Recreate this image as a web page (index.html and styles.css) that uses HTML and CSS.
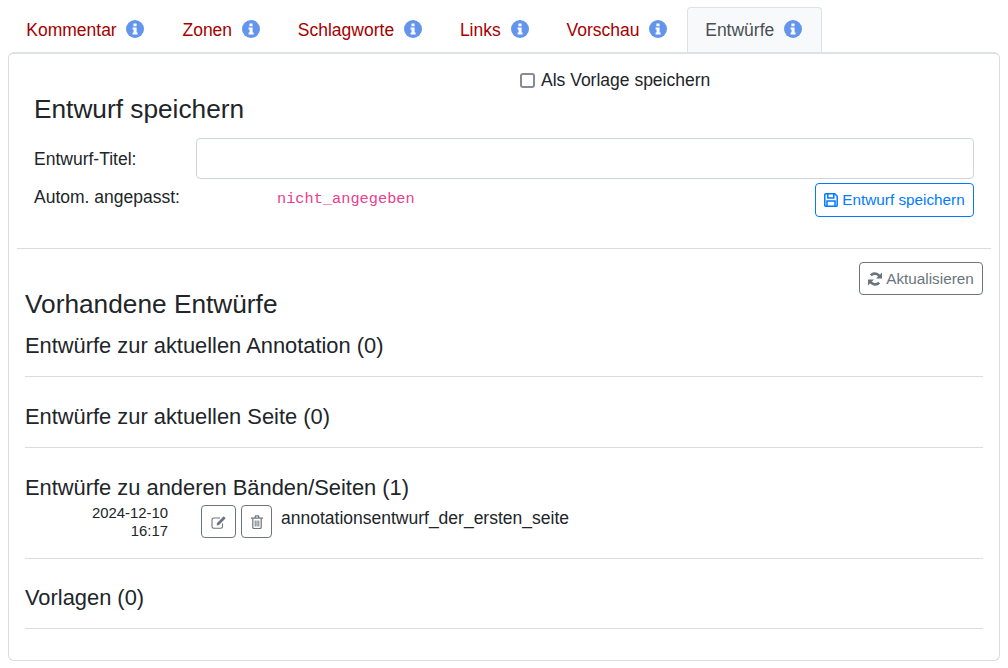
FILE: index.html
```html
<!DOCTYPE html>
<html lang="de">
<head>
<meta charset="utf-8">
<title>Entwürfe</title>
<link rel="stylesheet" href="styles.css">
</head>
<body>
<svg class="defs" width="0" height="0" aria-hidden="true">
  <symbol id="info" viewBox="0 0 18 18">
    <circle cx="9" cy="9" r="9" fill="#6495ed"/>
    <rect x="7.400" y="3.500" width="3.200" height="2.800" rx=".5" fill="#fff"/>
    <path d="M6.600 7.500h4v5h1v2H6.600v-2h1v-3h-1z" fill="#fff"/>
  </symbol>
</svg>
<ul class="tabs">
  <li class="tab"><span>Kommentar</span><svg class="info"><use href="#info"/></svg></li>
  <li class="tab"><span>Zonen</span><svg class="info"><use href="#info"/></svg></li>
  <li class="tab"><span>Schlagworte</span><svg class="info"><use href="#info"/></svg></li>
  <li class="tab"><span>Links</span><svg class="info"><use href="#info"/></svg></li>
  <li class="tab"><span>Vorschau</span><svg class="info"><use href="#info"/></svg></li>
  <li class="tab active"><span>Entwürfe</span><svg class="info"><use href="#info"/></svg></li>
</ul>
<main class="panel">
  <section class="save">
    <label class="template"><span class="checkbox"></span>Als Vorlage speichern</label>
    <h4 class="save-title">Entwurf speichern</h4>
    <div class="row-title">
      <span class="label">Entwurf-Titel:</span>
      <input class="input" type="text" aria-label="Entwurf-Titel">
    </div>
    <div class="row-auto">
      <span class="label label-auto">Autom. angepasst:</span>
      <code class="code">nicht_angegeben</code>
      <button class="btn btn-primary">
        <svg class="btn-icon" viewBox="0 0 14 14"><path d="M1.500.8h9.200l2.500 2.500v9.200a.7.7 0 0 1-.7.7H1.500a.7.7 0 0 1-.7-.7V1.500a.7.7 0 0 1 .7-.7z" fill="none" stroke="currentColor" stroke-width="1.500"/><path d="M3.800 1v4h6V1M3 13V8h8v5" fill="none" stroke="currentColor" stroke-width="1.500"/></svg>Entwurf speichern
      </button>
    </div>
  </section>
  <hr class="rule-main">
  <section class="drafts">
    <div class="refresh-row">
      <button class="btn btn-secondary">
        <svg class="btn-icon" viewBox="0 0 14 14"><path d="M12 5.600A5.400 5.400 0 0 0 2.800 3.400" fill="none" stroke="currentColor" stroke-width="2.600"/><path d="M14 .6v6H8z" fill="currentColor"/><path d="M2 8.400a5.400 5.400 0 0 0 9.200 2.200" fill="none" stroke="currentColor" stroke-width="2.600"/><path d="M0 13.400v-6h6z" fill="currentColor"/></svg>Aktualisieren
      </button>
    </div>
    <h4 class="drafts-title">Vorhandene Entwürfe</h4>
    <h5 class="group first">Entwürfe zur aktuellen Annotation (0)</h5>
    <hr class="rule">
    <h5 class="group">Entwürfe zur aktuellen Seite (0)</h5>
    <hr class="rule">
    <h5 class="group">Entwürfe zu anderen Bänden/Seiten (1)</h5>
    <div class="draft">
      <div class="date">2024-12-10<br>16:17</div>
      <div class="actions">
        <button class="btn-small edit" aria-label="Bearbeiten">
          <svg viewBox="0 0 16 14" width="16" height="14"><path d="M11.500 8.500v3a1.700 1.700 0 0 1-1.700 1.700H2.700A1.700 1.700 0 0 1 1 11.500V4.700A1.700 1.700 0 0 1 2.700 3H9" fill="none" stroke="currentColor" stroke-width="1.100"/><path d="M6 8 12.700 1.300l2 2L8 10l-2.300.4z" fill="currentColor"/></svg>
        </button>
        <button class="btn-small trash" aria-label="Löschen">
          <svg viewBox="0 0 12 14" width="12" height="14"><path d="M1.800 3.500v8.700a1.300 1.300 0 0 0 1.300 1.300h5.800a1.300 1.300 0 0 0 1.300-1.300V3.500" fill="none" stroke="currentColor" stroke-width="1.200"/><path d="M0 3.200h12M3.800 3l.8-2.200h2.800L8.200 3" fill="none" stroke="currentColor" stroke-width="1.200"/><path d="M4.200 5.500V11.500M6 5.500V11.500M7.800 5.500V11.500" fill="none" stroke="currentColor" stroke-width="1"/></svg>
        </button>
      </div>
      <div class="draft-name">annotationsentwurf_der_ersten_seite</div>
    </div>
    <hr class="rule rule-after-draft">
    <h5 class="group">Vorlagen (0)</h5>
    <hr class="rule">
  </section>
</main>
</body>
</html>
```
FILE: styles.css
```css
* { box-sizing: border-box; }
html, body { margin: 0; padding: 0; }
body {
  width: 1008px;
  height: 668px;
  padding: 7px 8px 0;
  background: #fff;
  color: #212529;
  font: 17.5px/24px "Liberation Sans", Arial, sans-serif;
  overflow: hidden;
}
.defs { position: absolute; }
.tabs {
  display: flex;
  margin: 0;
  padding: 0;
  list-style: none;
  height: 45px;
}
.tab {
  display: flex;
  align-items: center;
  gap: 9.75px;
  padding: 0 18.75px 1px 17.25px;
  border: 1px solid transparent;
  border-bottom: 0;
  border-radius: 4px 4px 0 0;
  color: #a50000;
}
.tab.active {
  background: #f8f9fa;
  border-color: #dee2e6;
  color: #495057;
}
.info { width: 18px; height: 18px; margin-top: -1px; }
.panel {
  height: 609px;
  border: 1px solid #dcdcdc;
  border-top: 2px solid #dee2e6;
  border-radius: 6px;
  padding: 0 8px;
}
.save { padding: 0 0 0 17px; height: 194px; display: flex; flex-direction: column; }
.template { display: flex; align-items: center; margin: 14px 0 0 486px; height: 24px; }
.checkbox {
  width: 15px; height: 15px; margin-right: 6px;
  border: 2px solid #8a8a96; border-radius: 3px; background: #fff;
}
.save-title { margin: 1px 0 0; font-size: 26.25px; line-height: 32px; font-weight: 400; }
.row-title { display: flex; align-items: center; margin-top: 13px; height: 41px; }
.label { width: 162px; flex: none; }
.input {
  width: 778px; height: 41px;
  border: 1px solid #ced4da; border-radius: 4px; background: #fff;
}
.row-auto { display: flex; align-items: flex-start; margin-top: 4px; width: 940px; }
.label-auto { margin-top: 2px; }
.code {
  margin: 4px 0 0 81px;
  font: 15.3125px/24px "Liberation Mono", monospace;
  color: #e83e8c;
}
.btn {
  display: inline-flex; align-items: center; justify-content: center;
  background: #fff; border: 1px solid; border-radius: 4px;
  font: 15.3125px/20px "Liberation Sans", Arial, sans-serif;
  padding: 0;
}
.btn-icon { width: 14px; height: 14px; margin-right: 4px; }
.btn-primary { margin-left: auto; width: 159px; height: 34px; color: #007bff; border-color: #007bff; }
.btn-secondary { width: 124px; height: 33px; color: #6c757d; border-color: #6c757d; }
.rule-main { margin: 0; border: 0; border-top: 1px solid #dcdcdc; }
.drafts { padding: 13px 8px 0; }
.refresh-row { display: flex; justify-content: flex-end; height: 33px; }
.drafts-title { margin: -7px 0 0; font-size: 26.25px; line-height: 32px; font-weight: 400; }
.group { margin: 0; font-size: 21.875px; line-height: 28px; font-weight: 400; }
.group.first { margin-top: 12px; }
.rule { margin: 16px 0 26px; border: 0; border-top: 1px solid #dcdcdc; }
.draft { display: flex; align-items: flex-start; margin-top: 3px; }
.date { width: 143px; flex: none; margin-top: -1px; text-align: right; font-size: 14.875px; line-height: 18px; }
.actions { display: flex; gap: 5px; margin-left: 33px; }
.btn-small {
  display: flex; align-items: center; justify-content: center;
  height: 33px; background: #fff; border: 1px solid #6c757d; border-radius: 4px; padding: 0;
  color: #6c757d;
}
.edit { width: 35px; }
.trash { width: 31px; }
.draft-name { margin: 1px 0 0 9px; line-height: 24px; }
.rule-after-draft { margin: 18px 0 25px; }
```
